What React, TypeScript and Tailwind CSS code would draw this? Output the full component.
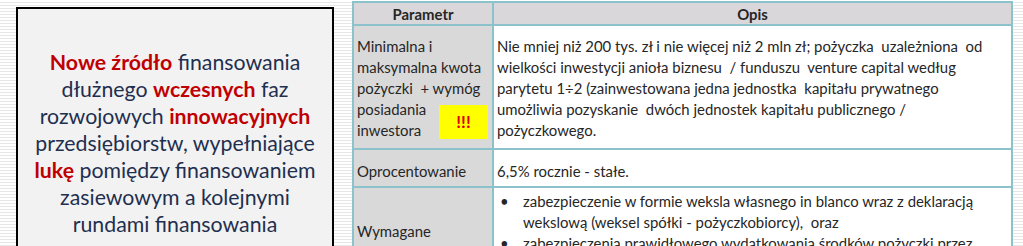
export default function App() {
  return (
    <div className="flex h-[246px] w-[1023px] overflow-hidden bg-[repeating-linear-gradient(180deg,#ffffff_0px,#ffffff_2px,#e6e6e6_2px,#e6e6e6_3px)] font-['Lato','Liberation_Sans',sans-serif]">
      <div className="ml-[16px] mt-[7px] h-[260px] w-[318px] shrink-0 border-2 border-black bg-[#f2f2f2] pt-[40px] text-center text-[21.3px] leading-[27px] text-[#1f2f4f]">
        <p>
          <b className="text-[#c00000]">Nowe źródło</b> finansowania
          <br />
          dłużnego <b className="text-[#c00000]">wczesnych</b> faz
          <br />
          rozwojowych <b className="text-[#c00000]">innowacyjnych</b>
          <br />
          przedsiębiorstw, wypełniające
          <br />
          <b className="text-[#c00000]">lukę</b> pomiędzy finansowaniem
          <br />
          zasiewowym a kolejnymi
          <br />
          rundami finansowania
        </p>
      </div>

      <div className="ml-[18px] mt-[1px] grid h-[270px] w-[661px] shrink-0 grid-cols-[138px_1fr] grid-rows-[21px_122px_36px_1fr] gap-[2px] bg-[#8cc2cb] p-[2px] text-[14.9px] leading-[21px] text-[#262626]">
        <div className="bg-[#dad7da] pt-[1px] text-center font-bold">Parametr</div>
        <div className="bg-[#dad7da] pt-[1px] text-center font-bold">Opis</div>

        <div className="flex flex-col bg-[#d9d9d9] pl-[3px] pr-[4px] pt-[10px]">
          <span>Minimalna i</span>
          <span>maksymalna kwota</span>
          <span>pożyczki&nbsp; + wymóg</span>
          <div className="flex items-center">
            <div className="flex flex-col">
              <span>posiadania</span>
              <span>inwestora</span>
            </div>
            <div className="ml-auto mt-[3px] flex h-[34px] w-[49px] items-center justify-center bg-[#ffff00] text-[17px] font-bold text-[#e00000]">
              !!!
            </div>
          </div>
        </div>
        <div className="flex flex-col whitespace-pre bg-white pl-[3px] pt-[10px]">
          <span>Nie mniej niż 200 tys. zł i nie więcej niż 2 mln zł; pożyczka  uzależniona  od</span>
          <span>wielkości inwestycji anioła biznesu  / funduszu  venture capital według</span>
          <span>parytetu 1÷2 (zainwestowana jedna jednostka  kapitału prywatnego</span>
          <span>umożliwia pozyskanie  dwóch jednostek kapitału publicznego /</span>
          <span>pożyczkowego.</span>
        </div>

        <div className="bg-[#d9d9d9] pl-[3px] pt-[11px]">Oprocentowanie</div>
        <div className="bg-white pl-[3px] pt-[11px]">6,5% rocznie - stałe.</div>

        <div className="bg-[#d9d9d9] pl-[3px] pt-[33px]">Wymagane</div>
        <div className="bg-white pt-[3px]">
          <ul className="flex flex-col">
            <li className="flex">
              <span className="w-[29px] shrink-0 pl-[6px]">•</span>
              <span>
                zabezpieczenie w formie weksla własnego in blanco wraz z deklaracją
                <br />
                wekslową (weksel spółki - pożyczkobiorcy),&nbsp; oraz
              </span>
            </li>
            <li className="flex">
              <span className="w-[29px] shrink-0 pl-[6px]">•</span>
              <span>zabezpieczenia prawidłowego wydatkowania środków pożyczki przez</span>
            </li>
          </ul>
        </div>
      </div>
    </div>
  );
}
